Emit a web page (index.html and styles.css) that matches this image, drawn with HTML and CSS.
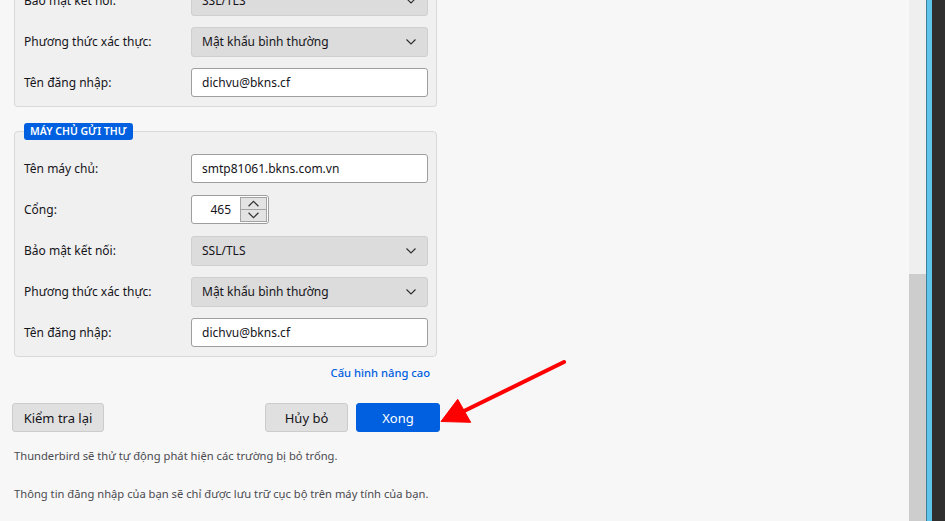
FILE: index.html
```html
<!DOCTYPE html>
<html lang="vi">
<head>
<meta charset="utf-8">
<title>Thiết lập tài khoản</title>
<link rel="stylesheet" href="styles.css">
</head>
<body>
<div class="window">
  <main class="content">
    <div class="form">
      <section class="group group-top">
        <div class="row">
          <span class="label">Bảo mật kết nối:</span>
          <div class="select">SSL/TLS<svg class="chev" viewBox="0 0 10 6"><path d="M0.5 0.5 L5 5 L9.5 0.5"/></svg></div>
        </div>
        <div class="row">
          <span class="label">Phương thức xác thực:</span>
          <div class="select">Mật khẩu bình thường<svg class="chev" viewBox="0 0 10 6"><path d="M0.5 0.5 L5 5 L9.5 0.5"/></svg></div>
        </div>
        <div class="row">
          <span class="label">Tên đăng nhập:</span>
          <div class="input">dichvu@bkns.cf</div>
        </div>
      </section>

      <section class="group group-out">
        <span class="legend">MÁY CHỦ GỬI THƯ</span>
        <div class="row">
          <span class="label">Tên máy chủ:</span>
          <div class="input">smtp81061.bkns.com.vn</div>
        </div>
        <div class="row">
          <span class="label">Cổng:</span>
          <div class="number">
            <span class="num-value">465</span>
            <span class="spin">
              <span class="spin-btn"><svg viewBox="0 0 10 6"><path d="M0.5 5.5 L5 1 L9.5 5.5"/></svg></span>
              <span class="spin-btn"><svg viewBox="0 0 10 6"><path d="M0.5 0.5 L5 5 L9.5 0.5"/></svg></span>
            </span>
          </div>
        </div>
        <div class="row">
          <span class="label">Bảo mật kết nối:</span>
          <div class="select">SSL/TLS<svg class="chev" viewBox="0 0 10 6"><path d="M0.5 0.5 L5 5 L9.5 0.5"/></svg></div>
        </div>
        <div class="row">
          <span class="label">Phương thức xác thực:</span>
          <div class="select">Mật khẩu bình thường<svg class="chev" viewBox="0 0 10 6"><path d="M0.5 0.5 L5 5 L9.5 0.5"/></svg></div>
        </div>
        <div class="row">
          <span class="label">Tên đăng nhập:</span>
          <div class="input">dichvu@bkns.cf</div>
        </div>
      </section>

      <div class="advanced"><a class="link">Cấu hình nâng cao</a></div>

      <div class="actions">
        <button class="btn btn-retest">Kiểm tra lại</button>
        <div class="actions-right">
          <button class="btn btn-cancel">Hủy bỏ</button>
          <button class="btn btn-primary">Xong</button>
        </div>
      </div>

      <p class="note note-first">Thunderbird sẽ thử tự động phát hiện các trường bị bỏ trống.</p>
      <p class="note note-second">Thông tin đăng nhập của bạn sẽ chỉ được lưu trữ cục bộ trên máy tính của bạn.</p>
    </div>
  </main>
  <div class="scrollbar"><div class="thumb"></div></div>
  <div class="edge"><div class="edge-line"></div><div class="edge-blue"></div><div class="edge-dark"></div></div>

  <svg class="arrow" viewBox="0 0 945 521" width="945" height="521">
    <line x1="564" y1="362" x2="460" y2="413" stroke="#ff0000" stroke-width="4" stroke-linecap="round"/>
    <polygon points="441,421.5 457.7,399.3 470.7,422.3" fill="#ff0000" stroke="#ff0000" stroke-width="1" stroke-linejoin="round"/>
  </svg>
</div>
</body>
</html>
```

FILE: styles.css
```css
* { box-sizing: border-box; }

html, body {
  margin: 0;
  padding: 0;
  height: 100%;
  overflow: hidden;
}

body {
  font-family: "Noto Sans", "Open Sans", sans-serif;
  font-size: 12px;
  color: #15141a;
  background: #f7f7f7;
}

.window {
  position: relative;
  display: flex;
  width: 945px;
  height: 521px;
  overflow: hidden;
}

.content {
  flex: 1;
  background: #f7f7f7;
  overflow: hidden;
}

.form {
  width: 423px;
  margin: -14px 0 0 14px;
}

.group {
  position: relative;
  background: #f0f0f0;
  border: 1px solid #d9d9d9;
  border-radius: 4px;
  padding: 22px 9px 9px 9px;
  display: flex;
  flex-direction: column;
  gap: 12px;
}

.group-top {
  border-top: none;
  border-radius: 0 0 4px 4px;
  padding-top: 0;
}

.group-out {
  margin-top: 24px;
}

.legend {
  position: absolute;
  left: 9px;
  top: -9px;
  height: 17px;
  padding: 0 6px;
  background: #0060df;
  color: #ffffff;
  font-size: 10.5px;
  font-weight: 600;
  line-height: 17px;
  border-radius: 3px;
}

.row {
  display: flex;
  align-items: center;
  height: 29px;
}

.label {
  width: 167px;
  flex: none;
  white-space: nowrap;
}

.input,
.select {
  width: 237px;
  flex: none;
  display: flex;
  align-items: center;
  padding: 0 10px;
  border-radius: 3px;
  white-space: nowrap;
}

.input {
  height: 29px;
  background: #ffffff;
  border: 1px solid #9e9e9e;
}

.select {
  height: 30px;
  background: #dcdcdc;
  border: 1px solid #cfcfcf;
  justify-content: space-between;
}

.chev {
  width: 10px;
  height: 6px;
  margin-right: 1px;
  fill: none;
  stroke: #2b2b2b;
  stroke-width: 1.1;
}

.number {
  width: 78px;
  height: 29px;
  flex: none;
  display: flex;
  align-items: center;
  background: #ffffff;
  border: 1px solid #9e9e9e;
  border-radius: 3px;
  padding: 2px 1px 2px 0;
}

.num-value {
  flex: 1;
  text-align: right;
  padding-right: 9px;
}

.spin {
  width: 27px;
  height: 25px;
  display: flex;
  flex-direction: column;
  border: 1px solid #a3a3a3;
  background: #e3e3e3;
}

.spin-btn {
  flex: 1;
  display: flex;
  align-items: center;
  justify-content: center;
}

.spin-btn + .spin-btn {
  border-top: 1px solid #a3a3a3;
}

.spin-btn svg {
  width: 11px;
  height: 7px;
  fill: none;
  stroke: #333333;
  stroke-width: 1.1;
}

.advanced {
  display: flex;
  justify-content: flex-end;
  margin-top: 8px;
  padding-right: 7px;
  line-height: 16px;
}

.link {
  color: #0060df;
  font-size: 11.2px;
  font-weight: 500;
}

.actions {
  display: flex;
  justify-content: space-between;
  margin: 22px -3px 0 -2px;
}

.actions-right {
  display: flex;
  gap: 8px;
}

.btn {
  height: 29px;
  font-family: inherit;
  font-size: 13px;
  color: #15141a;
  background: #e0e0e0;
  border: 1px solid #cccccc;
  border-radius: 3px;
  padding: 0;
}

.btn-retest { width: 92px; }
.btn-cancel { width: 83px; }

.btn-primary {
  width: 84px;
  background: #0060df;
  border-color: #0060df;
  color: #ffffff;
}

.note {
  margin: 0;
  color: #4a4a4f;
  font-size: 11.2px;
  line-height: 16px;
  white-space: nowrap;
}

.note-first { margin-top: 16px; }
.note-second { margin-top: 22px; }

.scrollbar {
  width: 17px;
  flex: none;
  background: #efefef;
  display: flex;
  flex-direction: column;
  justify-content: flex-end;
}

.thumb {
  height: 247px;
  background: #cdcdcd;
}

.edge {
  width: 19px;
  flex: none;
  display: flex;
}

.edge-line { width: 1px; background: #3f7f99; }
.edge-blue { width: 5px; background: #5ec4ea; }
.edge-dark { flex: 1; background: #2f2f2f; }

.arrow {
  position: absolute;
  left: 0;
  top: 0;
  pointer-events: none;
}
```
